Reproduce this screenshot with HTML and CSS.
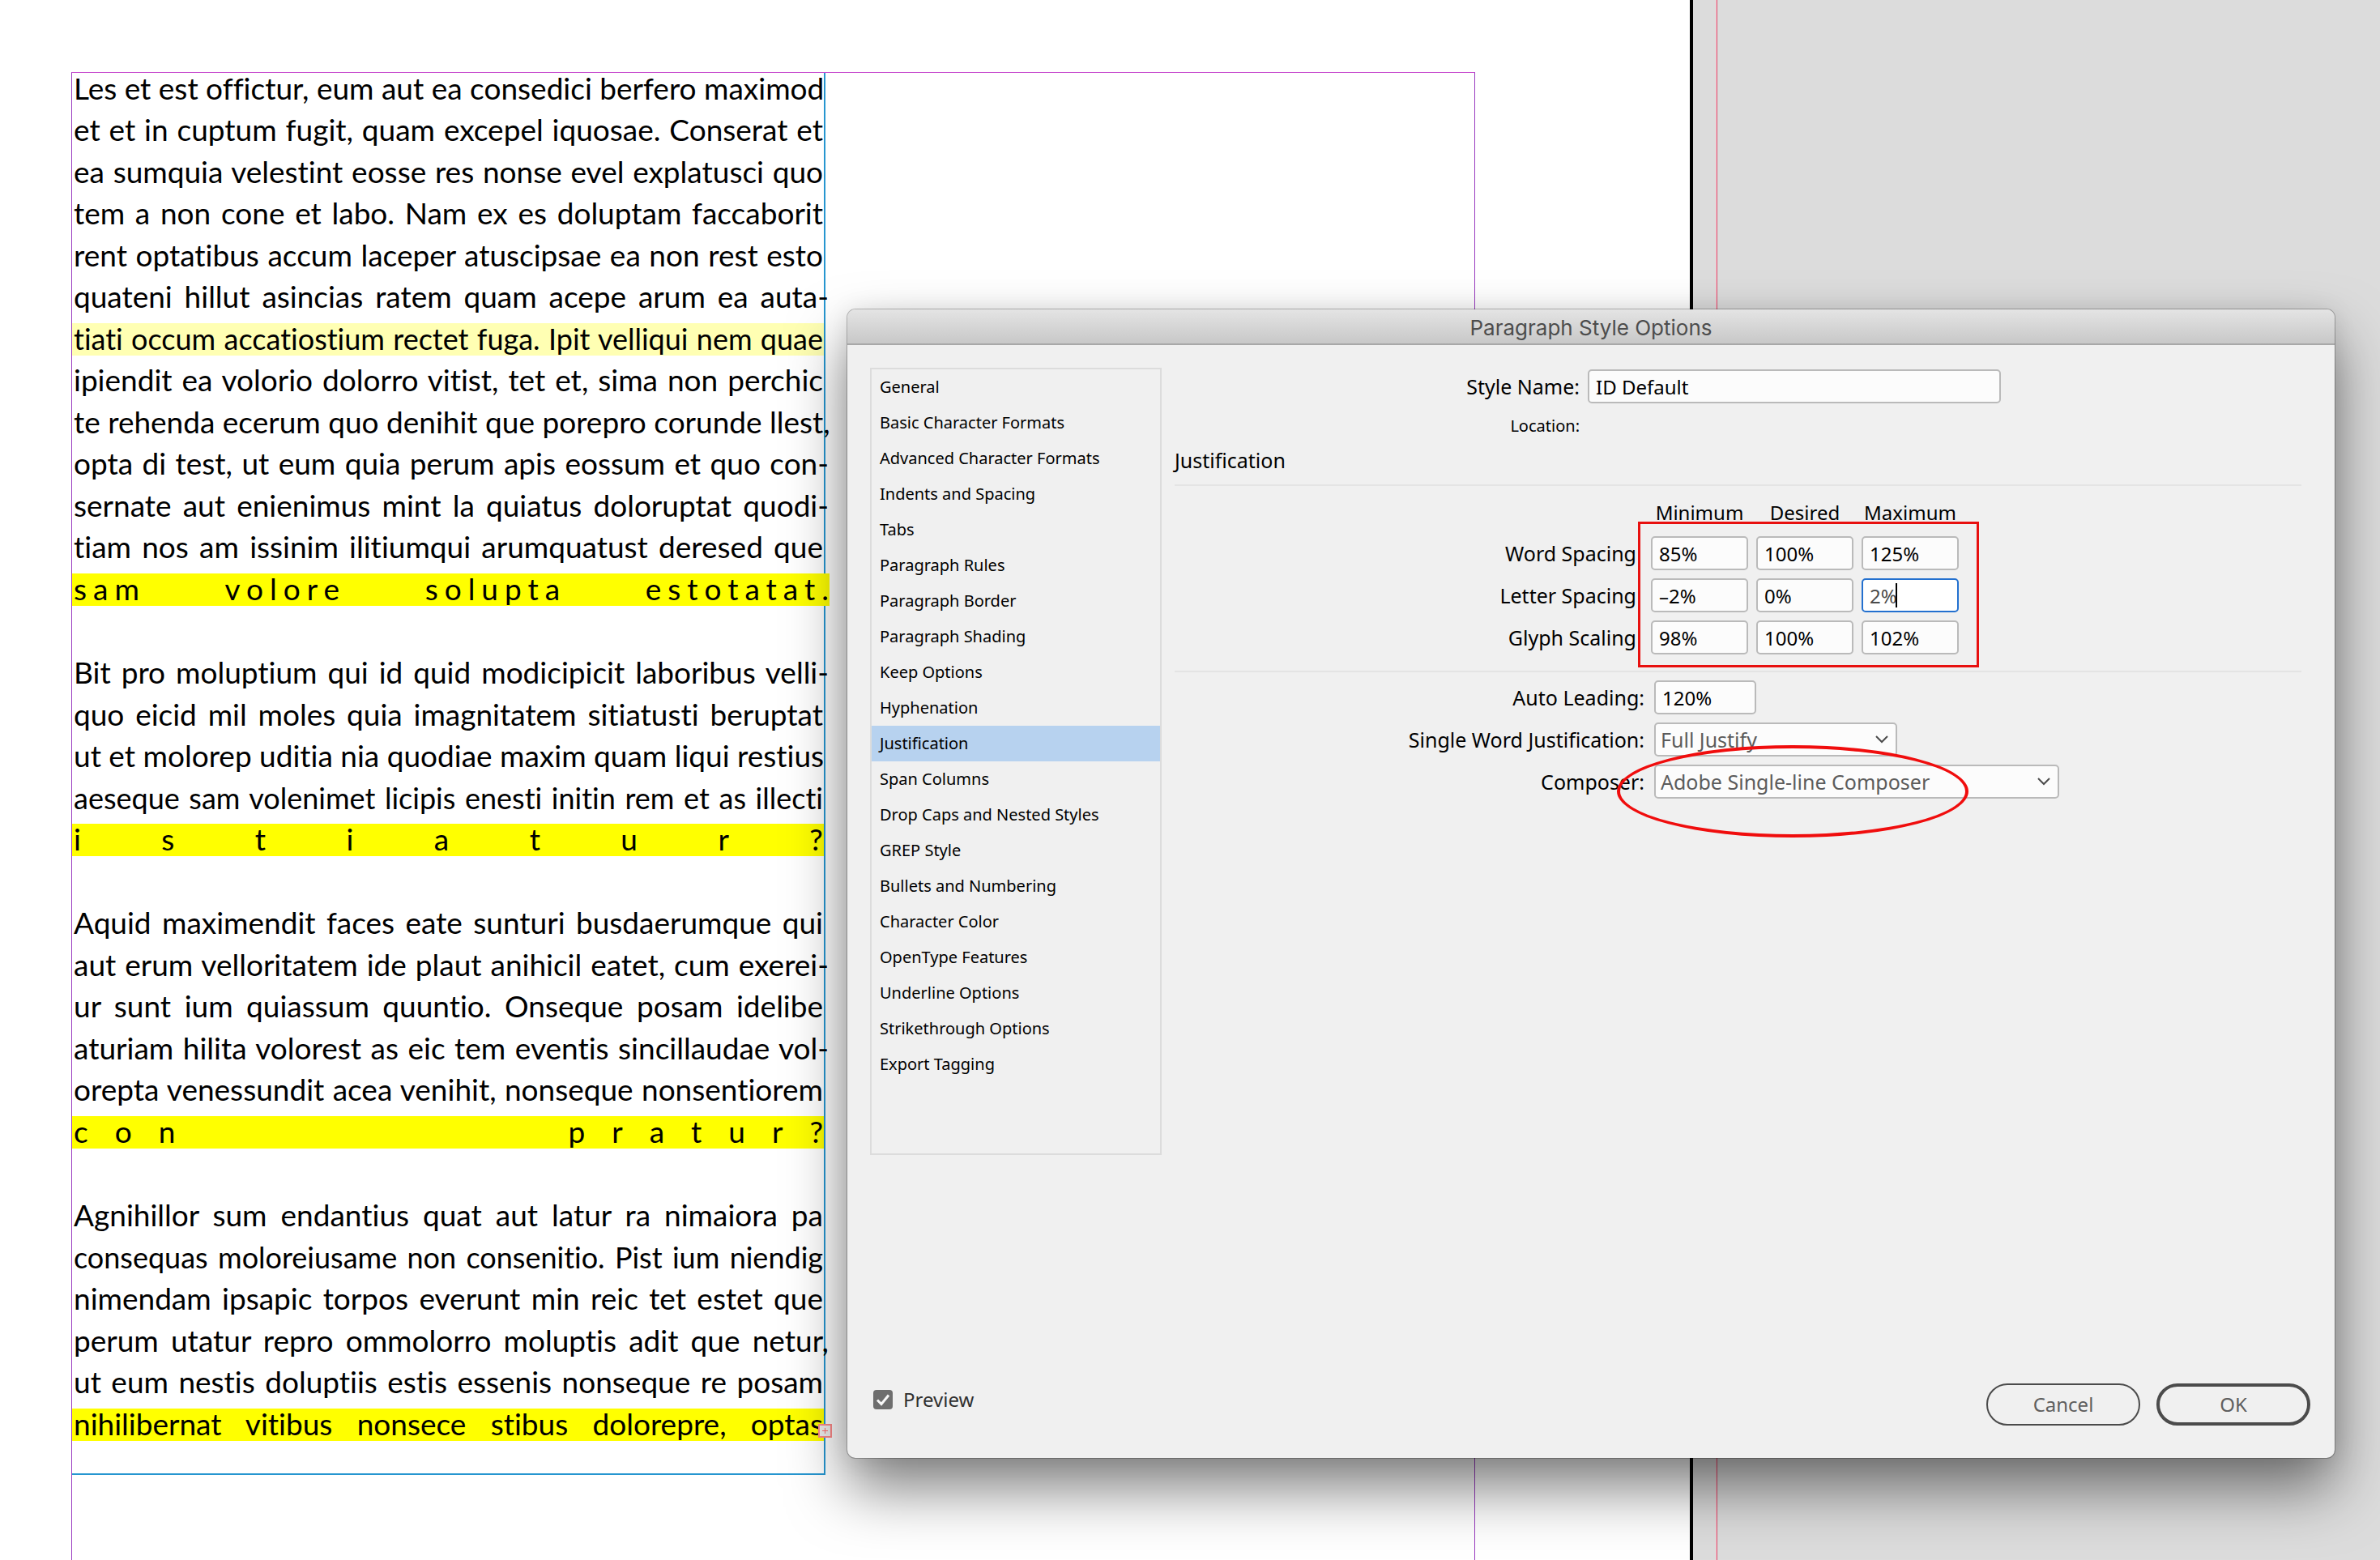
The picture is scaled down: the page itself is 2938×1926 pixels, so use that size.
FILE: index.html
```html
<!DOCTYPE html>
<html lang="en">
<head>
<meta charset="utf-8">
<title>Paragraph Style Options</title>
<link rel="stylesheet" href="styles.css">
</head>
<body>
<div class="workspace">
  <main class="sheet">
    <div class="margins">
      <article class="story">
        <p class="para">
          <span class="line">Les et est offictur, eum aut ea consedici berfero maximod</span>
          <span class="line">et et in cuptum fugit, quam excepel iquosae. Conserat et</span>
          <span class="line">ea sumquia velestint eosse res nonse evel explatusci quo</span>
          <span class="line">tem a non cone et labo. Nam ex es doluptam faccaborit</span>
          <span class="line">rent optatibus accum laceper atuscipsae ea non rest esto</span>
          <span class="line hang">quateni hillut asincias ratem quam acepe arum ea auta-</span>
          <span class="line pale tight">tiati occum accatiostium rectet fuga. Ipit velliqui nem quae</span>
          <span class="line">ipiendit ea volorio dolorro vitist, tet et, sima non perchic</span>
          <span class="line hang">te rehenda ecerum quo denihit que porepro corunde llest,</span>
          <span class="line hang">opta di test, ut eum quia perum apis eossum et quo con-</span>
          <span class="line hang">sernate aut enienimus mint la quiatus doloruptat quodi-</span>
          <span class="line">tiam nos am issinim ilitiumqui arumquatust deresed que</span>
          <span class="line hang bright spread"><span class="word loose">sam</span> <span class="word loose">volore</span> <span class="word loose">solupta</span> <span class="word loose">estotatat.</span></span>
        </p>
        <p class="para">
          <span class="line hang">Bit pro moluptium qui id quid modicipicit laboribus velli-</span>
          <span class="line">quo eicid mil moles quia imagnitatem sitiatusti beruptat</span>
          <span class="line">ut et molorep uditia nia quodiae maxim quam liqui restius</span>
          <span class="line tight">aeseque sam volenimet licipis enesti initin rem et as illecti</span>
          <span class="line bright spread"><span>i</span><span>s</span><span>t</span><span>i</span><span>a</span><span>t</span><span>u</span><span>r</span><span>?</span></span>
        </p>
        <p class="para">
          <span class="line">Aquid maximendit faces eate sunturi busdaerumque qui</span>
          <span class="line hang">aut erum velloritatem ide plaut anihicil eatet, cum exerei-</span>
          <span class="line">ur sunt ium quiassum quuntio. Onseque posam idelibe</span>
          <span class="line hang">aturiam hilita volorest as eic tem eventis sincillaudae vol-</span>
          <span class="line">orepta venessundit acea venihit, nonseque nonsentiorem</span>
          <span class="line bright spread"><span class="word airy"><span>c</span><span>o</span><span>n</span></span> <span class="word airy"><span>p</span><span>r</span><span>a</span><span>t</span><span>u</span><span>r</span><span>?</span></span></span>
        </p>
        <p class="para">
          <span class="line">Agnihillor sum endantius quat aut latur ra nimaiora pa</span>
          <span class="line tight">consequas moloreiusame non consenitio. Pist ium niendig</span>
          <span class="line">nimendam ipsapic torpos everunt min reic tet estet que</span>
          <span class="line hang">perum utatur repro ommolorro moluptis adit que netur,</span>
          <span class="line">ut eum nestis doluptiis estis essenis nonseque re posam</span>
          <span class="line bright">nihilibernat vitibus nonsece stibus dolorepre, optas</span>
        </p>
        <svg class="overset" viewBox="0 0 17 17" aria-hidden="true"><rect x="1" y="1" width="15" height="15" fill="#f0f0f0" stroke="#ff8a8a" stroke-width="2"/><path d="M8.500 5v7M5 8.500h7" stroke="#ff7070" stroke-width="1"/></svg>
      </article>
    </div>
  </main>
  <aside class="pasteboard"></aside>
</div>

<section class="dialog" role="dialog" aria-labelledby="dialog-title">
  <header class="titlebar"><h1 id="dialog-title">Paragraph Style Options</h1></header>
  <div class="body">
    <ul class="sections">
      <li><a href="#">General</a></li>
      <li><a href="#">Basic Character Formats</a></li>
      <li><a href="#">Advanced Character Formats</a></li>
      <li><a href="#">Indents and Spacing</a></li>
      <li><a href="#">Tabs</a></li>
      <li><a href="#">Paragraph Rules</a></li>
      <li><a href="#">Paragraph Border</a></li>
      <li><a href="#">Paragraph Shading</a></li>
      <li><a href="#">Keep Options</a></li>
      <li><a href="#">Hyphenation</a></li>
      <li><a href="#" class="current" aria-current="true">Justification</a></li>
      <li><a href="#">Span Columns</a></li>
      <li><a href="#">Drop Caps and Nested Styles</a></li>
      <li><a href="#">GREP Style</a></li>
      <li><a href="#">Bullets and Numbering</a></li>
      <li><a href="#">Character Color</a></li>
      <li><a href="#">OpenType Features</a></li>
      <li><a href="#">Underline Options</a></li>
      <li><a href="#">Strikethrough Options</a></li>
      <li><a href="#">Export Tagging</a></li>
    </ul>
    <div class="panel">
      <div class="identity">
        <label for="style-name">Style Name:</label>
        <input id="style-name" class="field" type="text" value="ID Default">
        <span class="location">Location:</span>
      </div>
      <h2>Justification</h2>
      <div class="matrix">
        <span></span><span class="col">Minimum</span><span class="col">Desired</span><span class="col">Maximum</span>
        <label for="ws-min">Word Spacing</label>
        <input id="ws-min" class="field" type="text" value="85%">
        <input class="field" type="text" value="100%" aria-label="Word Spacing Desired">
        <input class="field" type="text" value="125%" aria-label="Word Spacing Maximum">
        <label for="ls-min">Letter Spacing</label>
        <input id="ls-min" class="field" type="text" value="–2%">
        <input class="field" type="text" value="0%" aria-label="Letter Spacing Desired">
        <span class="editing"><input class="field active" type="text" value="2%" aria-label="Letter Spacing Maximum"><i class="caret"></i></span>
        <label for="gs-min">Glyph Scaling</label>
        <input id="gs-min" class="field" type="text" value="98%">
        <input class="field" type="text" value="100%" aria-label="Glyph Scaling Desired">
        <input class="field" type="text" value="102%" aria-label="Glyph Scaling Maximum">
        <div class="mark-box"></div>
      </div>
      <div class="settings">
        <label for="leading">Auto Leading:</label>
        <input id="leading" class="field leading" type="text" value="120%">
        <label for="single">Single Word Justification:</label>
        <span class="picker short">
          <select id="single" class="field"><option>Full Justify</option></select>
          <svg viewBox="0 0 16 10" aria-hidden="true"><path d="M1 1l7 7 7-7"/></svg>
        </span>
        <label for="composer">Composer:</label>
        <span class="picker long">
          <select id="composer" class="field"><option>Adobe Single-line Composer</option></select>
          <svg viewBox="0 0 16 10" aria-hidden="true"><path d="M1 1l7 7 7-7"/></svg>
        </span>
        <div class="mark-oval"></div>
      </div>
    </div>
  </div>
  <footer class="actions">
    <label class="preview"><span class="tick"><input type="checkbox" checked><svg viewBox="0 0 24 24" aria-hidden="true"><path d="M5 12.500l5 5L19 6.500"/></svg></span>Preview</label>
    <button type="button" class="btn">Cancel</button>
    <button type="button" class="btn primary">OK</button>
  </footer>
</section>
</body>
</html>
```
FILE: styles.css
```css
*, ::before { box-sizing: border-box; }

body {
  margin: 0;
  background: #fff;
  color: #000;
  font: 24px/32px "Noto Sans", sans-serif;
  overflow: hidden;
}

/* document window */
.workspace { display: flex; min-height: 100vh; }

.sheet {
  flex: 1;
  display: flex;
  padding: 89px 265px 0 88px;
  border-right: 4px solid #000;
}

.margins {
  flex: 1;
  display: flex;
  padding-bottom: 105px;
  border: 1px solid #9a3cc0;
  border-top-color: #c850d0;
  border-bottom: 0;
}

.story {
  position: relative;
  width: 930px;
  display: flex;
  flex-direction: column;
  justify-content: space-between;
  padding: 0 0 40px;
  border-right: 2px solid #2696d0;
  border-bottom: 2px solid #2696d0;
  font: 37px/38px Lato, sans-serif;
  font-variant-ligatures: none;
}

.para { display: contents; }
.para + .para .line:first-child { margin-top: 52px; }

.line {
  display: block;
  height: 40px;
  padding: 0 1px 0 2px;
  white-space: nowrap;
  text-align: justify;
  text-align-last: justify;
}
.tight { font-size: 36px; }
.hang { margin-right: -7px; }
.pale { background: #ffffb3; }
.bright { background: #ff0; }
.spread { display: flex; justify-content: space-between; }
.loose { letter-spacing: 8px; }
.loose:last-child { margin-right: -8px; }
.airy { display: flex; gap: 33px; }

.overset { position: absolute; right: -10px; bottom: 44px; width: 17px; height: 17px; }

.pasteboard {
  flex: 0 0 848px;
  padding-left: 28px;
  background: #dcdcdc;
}
.pasteboard::before {
  content: "";
  display: block;
  width: 2px;
  height: 100%;
  border-left: 1px solid #ffc4d0;
  background: #d0506e;
}

/* dialog window */
.dialog {
  position: absolute;
  left: 1046px;
  right: 56px;
  top: 382px;
  bottom: 126px;
  display: flex;
  flex-direction: column;
  background: #f0f0f0;
  border-radius: 10px;
  box-shadow: 0 0 0 1px rgba(0,0,0,.25), 0 38px 72px rgba(0,0,0,.5), 0 0 30px rgba(0,0,0,.08);
}

.titlebar {
  height: 44px;
  border-bottom: 2px solid #a8a8a8;
  border-radius: 10px 10px 0 0;
  background: linear-gradient(#e4e4e4, #c8c8c8);
}
.titlebar h1 {
  margin: 0;
  text-align: center;
  font: 26px/46px Inter, sans-serif;
  color: #4d4d4d;
}

.body { display: flex; gap: 16px; padding: 28px 41px 0 28px; }

.sections {
  flex: 0 0 360px;
  min-height: 972px;
  margin: 0;
  padding: 0;
  border: 2px solid #dcdcdc;
  list-style: none;
}
.sections a {
  display: block;
  padding: 0 10px;
  font-size: 20px;
  line-height: 44px;
  color: #000;
  text-decoration: none;
}
.sections .current { background: #b7d2ef; }

.panel { flex: 1; }
.panel label { font-size: 25px; }

.identity {
  display: grid;
  grid-template-columns: 500px 510px;
  gap: 10px;
  padding-top: 2px;
  align-items: center;
  text-align: right;
}
.location { font-size: 20px; line-height: 36px; }

.panel h2 {
  margin: 0;
  padding: 8px 0 14px;
  border-bottom: 2px solid #e4e4e4;
  font: 25px/32px "Noto Sans", sans-serif;
}

.matrix {
  position: relative;
  display: grid;
  grid-template-columns: 578px repeat(3, 120px);
  grid-template-rows: 52px repeat(3, 42px);
  gap: 10px;
  align-items: center;
  padding-bottom: 20px;
  border-bottom: 2px solid #e4e4e4;
}
.matrix label { padding-right: 8px; text-align: right; }
.col { text-align: center; padding-top: 14px; }

.field {
  width: 100%;
  height: 42px;
  padding: 0 8px;
  border: 2px solid #bababa;
  border-radius: 5px;
  background: #fcfcfc;
  font: 24px/32px "Noto Sans", sans-serif;
  color: #000;
  outline: 0;
}
.active { background: #fff; border-color: #2370cf; color: #4b4b4b; }
.editing { position: relative; height: 42px; }
.caret { position: absolute; left: 42px; top: 6px; width: 2px; height: 30px; background: #000; }

.mark-box {
  position: absolute;
  left: 572px;
  top: 44px;
  width: 421px;
  height: 180px;
  border: 3px solid #e8100f;
}

.settings {
  position: relative;
  display: grid;
  grid-template-columns: 580px 1fr;
  gap: 10px 12px;
  align-items: center;
  padding-top: 10px;
}
.settings label { text-align: right; }
.leading { width: 126px; }
.picker { position: relative; height: 42px; }
.picker select { appearance: none; padding: 0 6px; font-size: 25px; color: #5c5c5c; }
.picker svg {
  position: absolute;
  right: 11px;
  top: 16px;
  width: 16px;
  height: 10px;
  fill: none;
  stroke: #4b4b4b;
  stroke-width: 2;
}
.short { width: 300px; }
.long { width: 500px; }

.mark-oval {
  position: absolute;
  left: 546px;
  top: 90px;
  width: 434px;
  height: 114px;
  border: 4px solid #f00d0d;
  border-radius: 50%;
}

.actions {
  display: flex;
  align-items: center;
  gap: 20px;
  margin-top: auto;
  padding: 0 30px 40px 32px;
}
.preview {
  display: flex;
  align-items: center;
  gap: 13px;
  margin-right: auto;
  padding-bottom: 12px;
  color: #303030;
}
.tick { position: relative; width: 24px; height: 24px; }
.tick input {
  display: block;
  appearance: none;
  width: 24px;
  height: 24px;
  margin: 0;
  border-radius: 4px;
  background: #6e6e6e;
}
.tick svg { position: absolute; inset: 0; fill: none; stroke: #f8f8f8; stroke-width: 3; }

.btn {
  width: 190px;
  height: 52px;
  padding: 0;
  border: 2px solid #4b4b4b;
  border-radius: 26px;
  background: transparent;
  font: 24px/32px "Noto Sans", sans-serif;
  color: #5f5f5f;
}
.primary { border-width: 4px; }
```
